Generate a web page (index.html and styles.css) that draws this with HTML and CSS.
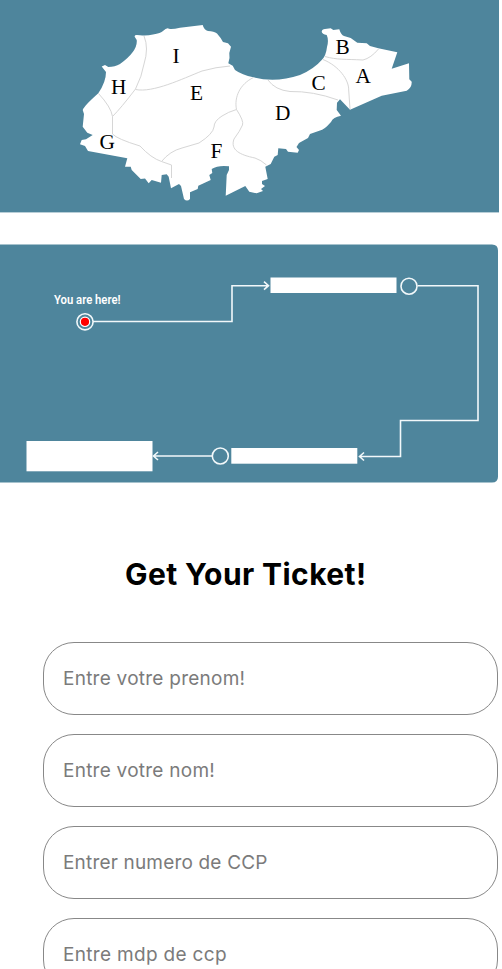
FILE: index.html
```html
<!DOCTYPE html>
<html lang="fr">
<head>
<meta charset="utf-8">
<title>Get Your Ticket!</title>
<link rel="stylesheet" href="styles.css">
</head>
<body>
<main class="page">
  <svg class="map" viewBox="0 0 499 212">
    <rect class="sea" width="499" height="212.400"/>
    <path class="land" d="M134.7 36.7Q134 34 140 35.3Q147 36 153 34.5Q161 33 163 31Q167 27 169 28.7Q172 29.5 180 27.7L202.7 25Q204 30 208 31Q214 31 217 33.5Q221 38 223 42L228 43.3L231 46.7L229.3 53L229.5 58L228.3 63.3L232.7 65.7L235 70Q242 75 253.3 77.3Q276 83 300 75Q314 69 321.7 60Q326 56 327 47Q329 40 326.7 35Q322 34 321.7 31.7Q322 29 325 29L330.7 28.3L333.3 30L339.3 29.3Q341 35 344 36L350.7 38L357.3 42.7L366.7 43.3L370 46L378.3 48.3L397.3 52.3L391.7 68.7L409 63.3L409.3 79.3L411.7 81.7Q412 88 406.7 90.7L381.7 95.7L350 109.7L340 99.3L337 102.7L336.7 110L341 115.7Q333 117 331 122Q324 130 320 130.5L310 134L308 138L299 143L296.5 147L299 150L297.7 152.7L288 151.7L286 149L278.3 148.3L277.7 155L274.3 156.7L270.7 164L265.3 166.7L267.7 179L262 181L262 184L265 186L261 189L263 191L256.7 193.3L249.3 191.7L245.3 186L225.7 195.7L226.7 175L229 170L229 166.3Q218 165 211.7 169L212.3 173L209.3 175L210.7 180L198.3 185.7L197.7 189L190 192.3L190 199Q187 202 184 199L181 186L179 184L171 188.3L168.7 176.7L166.7 174.3L161.7 175L161 182.7L151.7 180L148.7 183.3L145 178.5L140.7 179L131.7 170L130.7 166.7L125 166.7L127.3 158.3L88 151L85 146L80 144.3L81.7 140L86 139.3L92.7 135L87.3 132.7L82.7 126.7L84 114L82.7 110Q84 106 98.3 93.3Q106 82 106 72L101.7 66.5L105 65L108.3 67Q115 67 120 64Q138 51 136.7 40Z"/>
    <g class="borders">
      <path d="M144 36Q149 48 144 64Q142 76 135.500 89Q121 108 112.500 116.500V134Q117 139 140 146Q151 158 161.500 161.500L171.500 165V178"/>
      <path d="M98.500 93.500Q111 107 112.500 116.500"/>
      <path d="M135.500 89.500C153 93 182 79 202 71Q216 67 230 66"/>
      <path d="M161.500 161.500Q170 151 182 148L199 143Q213 134 214 127Q214 121 222 116Q228 112 236.500 109.500"/>
      <path d="M253.500 77.500C240 84 234 97 236.500 109.500Q244 121 242.500 125Q240 131 234 139C230 150 240 155 255 158Q261 160 266.500 165"/>
      <path d="M268 80Q275 90 290 91.500Q313 91 338 100"/>
      <path d="M323 59.500C339 66 349 80 348.700 90L350 109"/>
      <path d="M325 56.500C337 60 345 59 363 60Q371 58 378.500 49"/>
    </g>
    <g class="zones">
      <text x="172.500" y="62.500">I</text>
      <text x="335.500" y="53.500">B</text>
      <text x="355.500" y="83">A</text>
      <text x="311.500" y="89.500">C</text>
      <text x="190" y="99.500">E</text>
      <text x="111" y="94">H</text>
      <text x="275" y="120">D</text>
      <text x="99.500" y="149">G</text>
      <text x="210.500" y="158">F</text>
    </g>
  </svg>

  <svg class="route" viewBox="0 0 498 239">
    <path class="panel" d="M0 .5H492Q498 .5 498 6.500V232.600Q498 238.600 492 238.600H0Z"/>
    <g class="line">
      <path d="M93 77.500H232V41.700H268M264 37.700L268.500 41.700L264 45.700"/>
      <path d="M417.500 41.700H478V176.500H400.500V212.500H360M364 208.500L359.500 212.500L364 216.500"/>
      <path d="M212 212H154M158 208L153.500 212L158 216"/>
      <circle cx="85" cy="77.800" r="8.100"/>
      <circle cx="409" cy="42.200" r="8"/>
      <circle cx="220.300" cy="212" r="8"/>
    </g>
    <circle class="here" cx="85" cy="77.800" r="4.700"/>
    <rect class="stop" x="270.500" y="33.500" width="126" height="15.500"/>
    <rect class="stop" x="231.300" y="204" width="126" height="15.700"/>
    <rect class="stop" x="26.500" y="197" width="126" height="30.300"/>
    <text class="label" x="54" y="60" textLength="66.500" lengthAdjust="spacingAndGlyphs">You are here!</text>
  </svg>

  <h1 class="title">Get Your Ticket!</h1>
  <form class="form">
    <input class="field prenom" type="text" placeholder="Entre votre prenom!">
    <input class="field nom" type="text" placeholder="Entre votre nom!">
    <input class="field numero" type="text" placeholder="Entrer numero de CCP">
    <input class="field mdp" type="text" placeholder="Entre mdp de ccp">
  </form>
</main>
</body>
</html>
```
FILE: styles.css
```css
* { box-sizing: border-box; }
html, body { margin: 0; height: 100%; overflow: hidden; background: #fff; }
.page { width: 502px; height: 969px; overflow: hidden; display: flex; flex-direction: column; }
.map { flex: none; width: 499px; height: 212px; overflow: visible; }
.sea, .panel { fill: #4e859c; }
.land { fill: #fff; }
.borders { fill: none; stroke: #d6d6d6; stroke-width: 1; }
.zones { font: 21.3px "Liberation Serif", serif; fill: #000; }
.route { flex: none; width: 498px; height: 239px; margin-top: 32px; }
.line { fill: none; stroke: #f2f8fa; stroke-width: 1.6; }
.here { fill: #f00; stroke: #fff; stroke-width: 1.2; }
.stop { fill: #fff; }
.label { font: 600 12px Roboto, sans-serif; fill: #fff; }
.title { flex: none; margin: 67px 0 44px 125px; height: 48px; font: 700 30px/48px Inter, sans-serif; letter-spacing: 0.4px; color: #000; white-space: nowrap; }
.form { display: flex; flex-direction: column; gap: 19px; padding-left: 43.4px; }
.field { flex: none; width: 454.5px; height: 73px; padding: 0 18px 0 18.6px; border: 1px solid #888; border-radius: 31px; background: #fff; font: 400 19px Inter, sans-serif; letter-spacing: 0.25px; }
.field::placeholder { color: #7b7b7b; opacity: 1; }
.numero { letter-spacing: 0.18px; }
.mdp { letter-spacing: 0.32px; }
```
